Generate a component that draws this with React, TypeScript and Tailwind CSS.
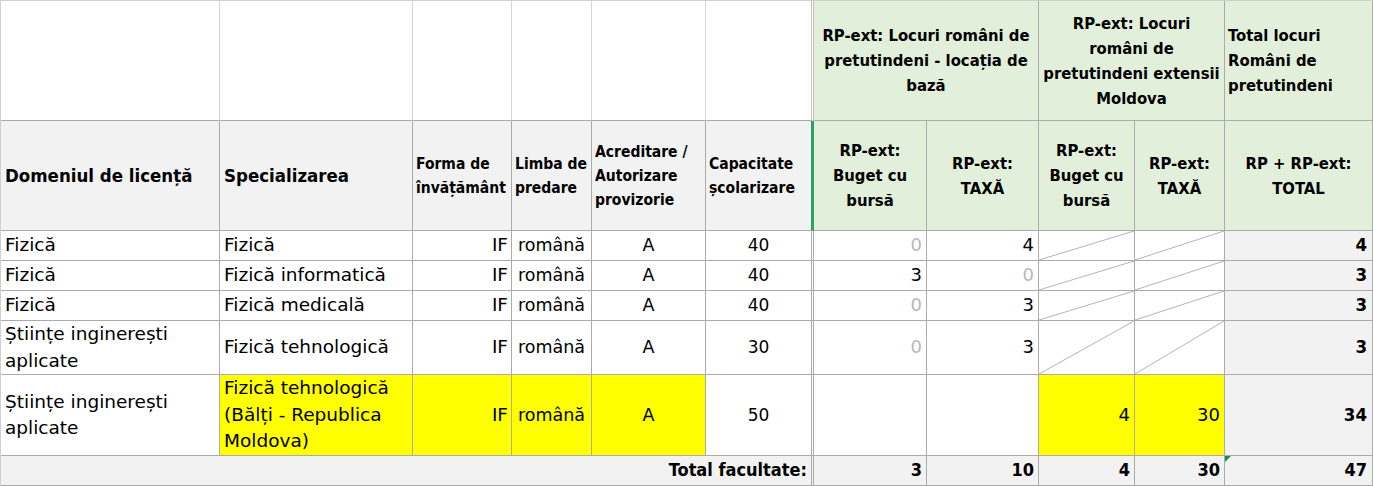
import React from 'react';

type Row = {
  domeniu: string[];
  spec: string[];
  h: string;
  yellow?: boolean;
  ext: (number | null)[];
  moldova: number[] | null;
  total: number;
};

const rows: Row[] = [
  { domeniu: ['Fizică'], spec: ['Fizică'], h: 'h-[30px]', ext: [0, 4], moldova: null, total: 4 },
  { domeniu: ['Fizică'], spec: ['Fizică informatică'], h: 'h-[30px]', ext: [3, 0], moldova: null, total: 3 },
  { domeniu: ['Fizică'], spec: ['Fizică medicală'], h: 'h-[30px]', ext: [0, 3], moldova: null, total: 3 },
  { domeniu: ['Științe inginerești', 'aplicate'], spec: ['Fizică tehnologică'], h: 'h-[54px]', ext: [0, 3], moldova: null, total: 3 },
  {
    domeniu: ['Științe inginerești', 'aplicate'],
    spec: ['Fizică tehnologică', '(Bălți - Republica', 'Moldova)'],
    h: 'h-[81px]',
    yellow: true,
    ext: [null, null],
    moldova: [4, 30],
    total: 34,
  },
];

const Lines = ({ lines }: { lines: string[] }) => (
  <>
    {lines.map((l, i) => (
      <React.Fragment key={i}>
        {i > 0 && <br />}
        {l}
      </React.Fragment>
    ))}
  </>
);

// grey diagonal for the "not applicable" cells
const Diagonal = () => (
  <svg className="absolute inset-0 w-full h-full" viewBox="0 0 100 100" preserveAspectRatio="none">
    <line x1="0" y1="100" x2="100" y2="0" stroke="#b4b4b4" strokeWidth="1" vectorEffect="non-scaling-stroke" />
  </svg>
);

const cell = 'border-r border-b border-[#ababab] align-middle p-0';
const sep = 'border-r-[3px] border-double';
const grey = 'bg-[#f2f2f2]';
const green = 'bg-[#e2efda]';
const yellow = 'bg-[#ffff00]';
const bold = "font-bold font-['DejaVu_Sans_Condensed','DejaVu_Sans',sans-serif]";

const App = () => {
  return (
    <div className="w-[1373px] h-[486px] overflow-hidden bg-white text-black font-['DejaVu_Sans',sans-serif]">
      <table className="w-[1373px] table-fixed border-separate border-spacing-0 border-l border-t border-[#d0d0d0]">
        <colgroup>
          <col className="w-[219px]" />
          <col className="w-[193px]" />
          <col className="w-[99px]" />
          <col className="w-[80px]" />
          <col className="w-[114px]" />
          <col className="w-[108px]" />
          <col className="w-[113px]" />
          <col className="w-[112px]" />
          <col className="w-[96px]" />
          <col className="w-[90px]" />
          <col className="w-[148px]" />
        </colgroup>
        <thead>
          <tr className="h-[120px]">
            <td className="border-r border-b border-r-[#d4d4d4] border-b-[#ababab] p-0" />
            <td className="border-r border-b border-r-[#d4d4d4] border-b-[#ababab] p-0" />
            <td className="border-r border-b border-r-[#d4d4d4] border-b-[#ababab] p-0" />
            <td className="border-r border-b border-r-[#d4d4d4] border-b-[#ababab] p-0" />
            <td className="border-r border-b border-r-[#d4d4d4] border-b-[#ababab] p-0" />
            <td className={`${cell} ${sep} border-r-[#c4c4c4]`} />
            <td colSpan={2} className={`${cell} ${green} ${bold} px-[3px] text-center text-[16.5px] leading-[25px] whitespace-nowrap`}>
              RP-ext: Locuri români de
              <br />
              pretutindeni - locația de
              <br />
              bază
            </td>
            <td colSpan={2} className={`${cell} ${green} ${bold} px-[2px] text-center text-[16.5px] leading-[25px] whitespace-nowrap`}>
              RP-ext: Locuri
              <br />
              români de
              <br />
              pretutindeni extensii
              <br />
              Moldova
            </td>
            <td className={`${cell} ${green} ${bold} px-[3px] text-left text-[16.5px] leading-[25px] whitespace-nowrap`}>
              Total locuri
              <br />
              Români de
              <br />
              pretutindeni
            </td>
          </tr>
          <tr className="h-[110px]">
            <td className={`${cell} ${grey} ${bold} pl-[4px] text-left text-[18.5px]`}>Domeniul de licență</td>
            <td className={`${cell} ${grey} ${bold} pl-[4px] text-left text-[18.5px]`}>Specializarea</td>
            <td className={`${cell} ${grey} ${bold} pl-[3px] text-left text-[15.5px] leading-[24px] whitespace-nowrap`}>
              Forma de
              <br />
              învățământ
            </td>
            <td className={`${cell} ${grey} ${bold} pl-[3px] text-left text-[15.5px] leading-[24px] whitespace-nowrap`}>
              Limba de
              <br />
              predare
            </td>
            <td className={`${cell} ${grey} ${bold} pl-[3px] text-left text-[15.5px] leading-[24px] whitespace-nowrap`}>
              Acreditare /
              <br />
              Autorizare
              <br />
              provizorie
            </td>
            <td className={`${cell} ${grey} ${bold} border-r-[3px] border-solid border-r-[#2aa362] pl-[3px] text-left text-[15.5px] leading-[24px] whitespace-nowrap`}>
              Capacitate
              <br />
              școlarizare
            </td>
            <td className={`${cell} ${green} ${bold} text-center text-[16.5px] leading-[25px]`}>
              RP-ext:
              <br />
              Buget cu
              <br />
              bursă
            </td>
            <td className={`${cell} ${green} ${bold} text-center text-[16.5px] leading-[25px]`}>
              RP-ext:
              <br />
              TAXĂ
            </td>
            <td className={`${cell} ${green} ${bold} text-center text-[16.5px] leading-[25px]`}>
              RP-ext:
              <br />
              Buget cu
              <br />
              bursă
            </td>
            <td className={`${cell} ${green} ${bold} text-center text-[16.5px] leading-[25px]`}>
              RP-ext:
              <br />
              TAXĂ
            </td>
            <td className={`${cell} ${green} ${bold} text-center text-[16.5px] leading-[25px] whitespace-nowrap`}>
              RP + RP-ext:
              <br />
              TOTAL
            </td>
          </tr>
        </thead>
        <tbody className="text-[18.5px] leading-[26.5px]">
          {rows.map((r, i) => (
            <tr key={i} className={r.h}>
              <td className={`${cell} pl-[4px] whitespace-nowrap`}>
                <Lines lines={r.domeniu} />
              </td>
              <td className={`${cell} ${r.yellow ? yellow : ''} pl-[4px] whitespace-nowrap`}>
                <Lines lines={r.spec} />
              </td>
              <td className={`${cell} ${r.yellow ? yellow : ''} pr-[3px] text-right`}>IF</td>
              <td className={`${cell} ${r.yellow ? yellow : ''} text-center text-[17.5px]`}>română</td>
              <td className={`${cell} ${r.yellow ? yellow : ''} text-center text-[17.5px]`}>A</td>
              <td className={`${cell} ${sep} text-center text-[17px]`}>{r.yellow ? 50 : i === 3 ? 30 : 40}</td>
              {r.ext.map((v, j) => (
                <td key={j} className={`${cell} pr-[4px] text-right text-[18px] ${v === 0 ? 'text-[#b8b8b8]' : ''}`}>
                  {v}
                </td>
              ))}
              {r.moldova
                ? r.moldova.map((v, j) => (
                    <td key={j} className={`${cell} ${yellow} pr-[4px] text-right text-[18px]`}>
                      {v}
                    </td>
                  ))
                : [0, 1].map((j) => (
                    <td key={j} className={`${cell} relative`}>
                      <Diagonal />
                    </td>
                  ))}
              <td className={`${cell} ${grey} ${bold} pr-[5px] text-right text-[18.5px]`}>{r.total}</td>
            </tr>
          ))}
          <tr className={`h-[30px] text-[18px] ${bold}`}>
            <td colSpan={6} className={`${cell} ${sep} ${grey} pr-[4px] text-right`}>
              Total facultate:
            </td>
            <td className={`${cell} ${grey} pr-[4px] text-right`}>3</td>
            <td className={`${cell} ${grey} pr-[4px] text-right`}>10</td>
            <td className={`${cell} ${grey} pr-[4px] text-right`}>4</td>
            <td className={`${cell} ${grey} pr-[4px] text-right`}>30</td>
            <td className={`${cell} ${grey} relative pr-[5px] text-right`}>
              <span className="absolute left-0 top-0 w-0 h-0 border-t-[6px] border-r-[6px] border-t-[#1f8a44] border-r-transparent" />
              47
            </td>
          </tr>
        </tbody>
      </table>
    </div>
  );
};

export default App;
